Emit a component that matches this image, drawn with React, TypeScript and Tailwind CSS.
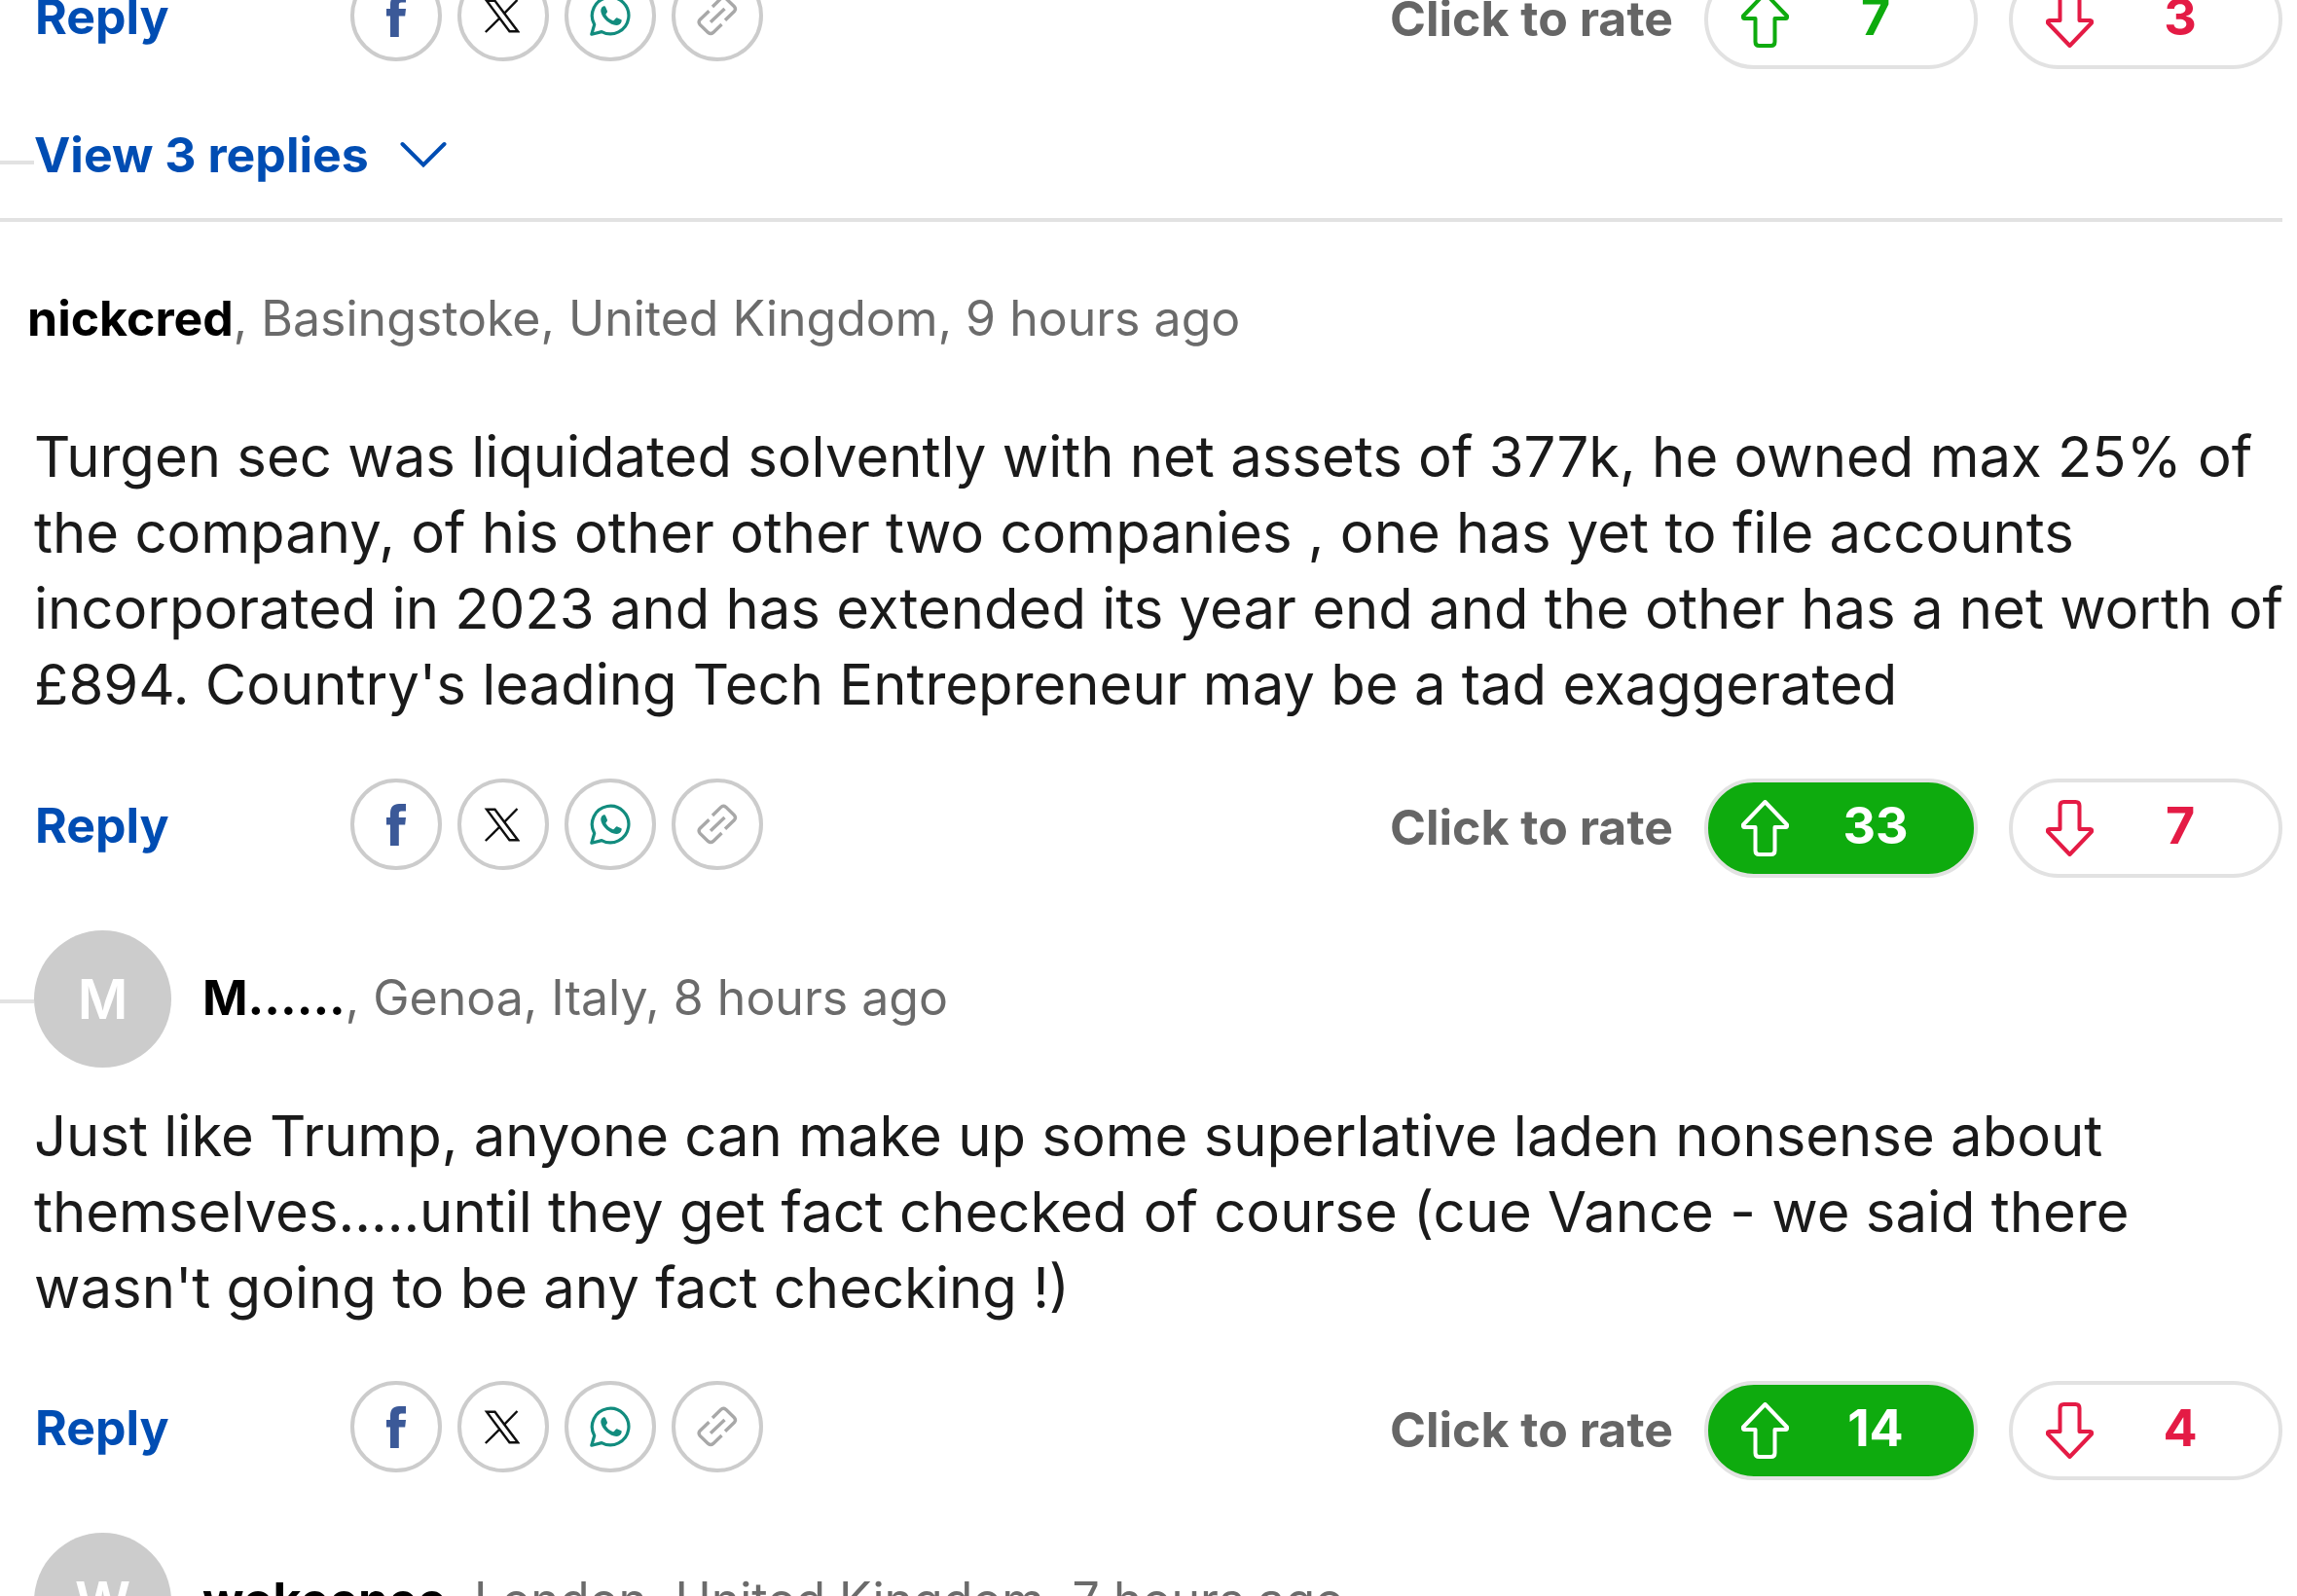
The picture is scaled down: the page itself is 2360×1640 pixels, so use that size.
import type { ReactNode } from "react";

type Rate = { up: number; down: number; voted?: boolean };

function Circle({ label, children }: { label: string; children: ReactNode }) {
  return (
    <a href="#share" aria-label={label} className="flex size-[94px] items-center justify-center rounded-full border-4 border-[#cccccc] bg-white">
      {children}
    </a>
  );
}

function FacebookIcon() {
  return (
    <svg viewBox="0 0 20 43" className="h-[43px] w-5" fill="#3b5998" aria-hidden="true">
      <path d="M4 43V21.5H0V14h4V9.5C4 3.5 7 0 13 0h7v7.5h-4.500C13.200 7.500 12.800 8.500 12.800 10.500V14H20l-.8 7.500h-6.400V43z" />
    </svg>
  );
}

function XIcon() {
  return (
    <svg viewBox="-1 -1 37 35" className="mr-1 h-[35px] w-[37px]" fill="none" stroke="#0f0f0f" strokeWidth="2.400" aria-hidden="true">
      <path d="M2 .8H10.500L34 32.200H25.500Z" />
      <path d="M.8 33 15.400 18.600M20 13.800 33.500 0" />
    </svg>
  );
}

function WhatsAppIcon() {
  return (
    <svg viewBox="0 0 42 42" className="size-[42px]" fill="none" aria-hidden="true">
      <path d="M1.800 40.200 4.700 30.200A18.800 18.800 0 1 1 12.200 37.600z" stroke="#128c7e" strokeWidth="3.200" strokeLinejoin="round" />
      <path d="M13.800 11.500c1.100-.4 2.100.1 2.600 1.200l1.500 3.600c.3.900-.1 1.500-.7 2.200-.9 1-1 1.300-.3 2.300 1.600 2.500 3.700 4.200 6.400 5.200.9.400 1.300.2 1.900-.5l1.300-1.600c.6-.7 1.100-.9 1.900-.5l3.500 1.700c.9.400.9 1 .7 1.900-.5 2.500-3 4-5.300 4-6.800-.4-13.800-6.400-15.700-12.900-.8-2.600-.1-5.600 2.200-6.600z" fill="#128c7e" />
    </svg>
  );
}

function LinkIcon() {
  return (
    <svg viewBox="0 0 42 42" className="size-[42px]" fill="none" stroke="#a8a8a8" strokeWidth="3.400" aria-hidden="true">
      <path d="M16 12 24.500 3.600Q27 1.200 29.800 3.400L38.200 11.500Q40.700 14.200 38.300 16.800L29 25.700" />
      <path d="M12.500 16.200 3.200 25.200Q1 27.800 3.200 30.400L11.500 38.400Q14.200 40.600 16.800 38.400L25.500 30" />
      <path d="M14 27.800 28.500 14" />
    </svg>
  );
}

function Arrow({ down = false }: { down?: boolean }) {
  return (
    <svg
      viewBox="0 0 49 58"
      className={down ? "h-[58px] w-[49px] rotate-180" : "h-[58px] w-[49px]"}
      fill="none"
      stroke="currentColor"
      strokeWidth="4"
      strokeLinejoin="round"
      aria-hidden="true"
    >
      <path d="M24.500 2 2 25.500Q1.500 28 3.500 28H14.500V52Q14.500 56 18.500 56H30.500Q34.500 56 34.500 52V28H45.500Q47.500 28 47 25.500z" />
    </svg>
  );
}

function RateButton({ count, kind, active = false }: { count: number; kind: "up" | "down"; active?: boolean }) {
  const tone = active
    ? "border-[#e2e2e2] bg-[#0eab0e] text-white"
    : kind === "up"
      ? "border-[#e2e2e2] bg-white text-[#0eab0e]"
      : "border-[#e2e2e2] bg-white text-[#e41b45]";
  return (
    <button
      type="button"
      aria-label={`Rate ${kind}, ${count}`}
      className={`flex h-[102px] w-[281px] items-center rounded-full border-4 pr-3 pl-[34px] text-[52px] font-bold ${tone}`}
    >
      <Arrow down={kind === "down"} />
      <span className="flex-1 pb-1 text-center leading-[60px]">{count}</span>
    </button>
  );
}

function Actions({ rate }: { rate: Rate }) {
  return (
    <div className="flex items-start justify-between pl-9">
      <div className="flex items-start">
        <button type="button" className="w-[324px] pt-[18px] text-left text-[50px] leading-[60px] font-bold text-[#004db3]">
          Reply
        </button>
        <div className="flex gap-4">
          <Circle label="Share on Facebook"><FacebookIcon /></Circle>
          <Circle label="Share on X"><XIcon /></Circle>
          <Circle label="Share on WhatsApp"><WhatsAppIcon /></Circle>
          <Circle label="Copy link"><LinkIcon /></Circle>
        </div>
      </div>
      <div className="flex items-center gap-8">
        <span className="pb-0.5 text-[50px] leading-[60px] font-bold text-[#666666]">Click to rate</span>
        <RateButton kind="up" count={rate.up} active={rate.voted} />
        <RateButton kind="down" count={rate.down} />
      </div>
    </div>
  );
}

function Author({ name, info }: { name: string; info: string }) {
  return (
    <p className="text-[50px] leading-[60px] whitespace-nowrap text-[#6b6b6b]">
      <strong className="font-bold text-black">{name}</strong>, {info}
    </p>
  );
}

function ReplyHeader({ initial, name, info }: { initial: string; name: string; info: string }) {
  return (
    <header className="flex items-center">
      <span className="mt-1 h-1 w-[35px] bg-[#e2e2e2]" />
      <span className="flex size-[141px] items-center justify-center rounded-full bg-[#cccccc] text-[56px] font-semibold text-white">
        {initial}
      </span>
      <div className="pb-1 pl-8">
        <Author name={name} info={info} />
      </div>
    </header>
  );
}

function Body({ children }: { children: ReactNode }) {
  return <p className="-mr-3 pl-[35px] text-[58px] leading-[78px] text-[#1a1a1a]">{children}</p>;
}

export default function App() {
  return (
    <main className="h-screen overflow-hidden bg-white pr-[15px] font-['Inter',sans-serif]">
      <section className="-mt-[31px] border-b-4 border-[#e2e2e2] pb-[30px]">
        <Actions rate={{ up: 7, down: 3 }} />
        <div className="mt-[53px] flex items-center">
          <span className="mt-4 h-1 w-[35px] bg-[#e2e2e2]" />
          <button type="button" className="flex items-center gap-8 text-[50px] leading-[70px] font-bold text-[#004db3]">
            View 3 replies
            <svg viewBox="0 0 48 28" className="h-7 w-12" fill="none" stroke="currentColor" strokeWidth="4" strokeLinecap="round" aria-hidden="true">
              <path d="M2.500 3 24 24.500 45.500 3" />
            </svg>
          </button>
        </div>
      </section>

      <article className="pt-[69px]">
        <header className="pl-7">
          <Author name="nickcred" info="Basingstoke, United Kingdom, 9 hours ago" />
        </header>
        <div className="pt-[73px] pb-[58px]">
          <Body>
            Turgen sec was liquidated solvently with net assets of 377k, he owned max 25% of the company, of his other
            other two companies , one has yet to file accounts incorporated in 2023 and has extended its year end and
            the other has a net worth of £894. Country's leading Tech Entrepreneur may be a tad exaggerated
          </Body>
        </div>
        <Actions rate={{ up: 33, down: 7, voted: true }} />
      </article>

      <article className="pt-[54px]">
        <ReplyHeader initial="M" name="M......" info="Genoa, Italy, 8 hours ago" />
        <div className="pt-[31px] pb-[57px]">
          <Body>
            Just like Trump, anyone can make up some superlative laden nonsense about themselves.....until they get
            fact checked of course (cue Vance - we said there wasn't going to be any fact checking !)
          </Body>
        </div>
        <Actions rate={{ up: 14, down: 4, voted: true }} />
      </article>

      <article className="pt-[54px]">
        <ReplyHeader initial="W" name="wokeenee" info="London, United Kingdom, 7 hours ago" />
      </article>
    </main>
  );
}
